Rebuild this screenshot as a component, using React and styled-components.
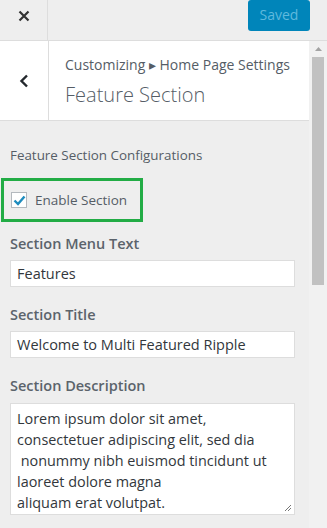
import React from 'react'
import styled, { createGlobalStyle } from 'styled-components'

const Global = createGlobalStyle`
  html, body { margin: 0; padding: 0; }
  body {
    background: #eeeeee;
    font-family: "Open Sans", "Noto Sans", sans-serif;
    color: #555d66;
    overflow: hidden;
  }
`

// LAYOUT
const Page = styled.div`
  width: 327px;
  height: 528px;
  display: flex;
  flex-direction: column;
  background: #eee;
  overflow: hidden;
`

const TopBar = styled.div`
  height: 40px;
  flex: none;
  display: flex;
  align-items: flex-start;
  justify-content: space-between;
  border-bottom: 1px solid #dddddd;
  background: #eeeeee;
`

const CloseBtn = styled.div`
  width: 48px;
  height: 40px;
  box-sizing: border-box;
  padding-bottom: 9px;
  border-right: 1px solid #dddddd;
  display: flex;
  align-items: center;
  justify-content: center;
`

const SaveBtn = styled.button`
  margin: 0 17px 0 0;
  width: 62px;
  height: 31px;
  padding: 0 0 2px;
  border: none;
  border-radius: 3px;
  background: #0085ba;
  color: #5fb9dd;
  font-family: inherit;
  font-size: 14px;
`

const Body = styled.div`
  flex: 1;
  display: flex;
  min-height: 0;
`

const Main = styled.div`
  flex: 1;
  display: flex;
  flex-direction: column;
`

const Scrollbar = styled.div`
  width: 18px;
  flex: none;
  background: #f1f1f1;
  display: flex;
  flex-direction: column;
  align-items: center;
`

const ScrollArrow = styled.div`
  height: 16px;
  display: flex;
  align-items: center;
  justify-content: center;
`

const Thumb = styled.div`
  width: 12px;
  height: 228px;
  background: #c1c1c1;
`

const Header = styled.div`
  height: 79px;
  display: flex;
  background: #fff;
  border-bottom: 1px solid #dddddd;
`

const BackBtn = styled.div`
  width: 48px;
  border-right: 1px solid #dddddd;
  display: flex;
  align-items: center;
  justify-content: center;
`

const TitleBlock = styled.div`
  flex: 1;
  padding: 14px 0 0 16px;
`

const Crumb = styled.div`
  font-size: 14px;
  color: #555d66;
  line-height: 20px;
`

const Title = styled.div`
  font-size: 20px;
  font-weight: 300;
  color: #555d66;
  line-height: 28px;
  margin-top: 6px;
`

const Content = styled.div`
  padding: 25px 0 0 10px;
`

const SectionNote = styled.div`
  font-size: 13.4px;
  line-height: 18px;
`

const Highlight = styled.label`
  margin: 14px 0 0 -9px;
  width: 142px;
  height: 44px;
  box-sizing: border-box;
  border: 3px solid #22ac45;
  display: flex;
  align-items: center;
  gap: 8px;
  padding-left: 7px;
  font-size: 13.5px;
`

const Check = styled.span`
  width: 16px;
  height: 16px;
  box-sizing: border-box;
  border: 1px solid #b4b9be;
  background: #fff;
  display: flex;
  align-items: center;
  justify-content: center;
`

const Field = styled.div`
  margin-top: ${p => p.$top}px;
`

const Label = styled.div`
  font-size: 14.5px;
  font-weight: 600;
  line-height: 20px;
  color: #5b636b;
`

const Input = styled.div`
  margin-top: 6px;
  width: 285px;
  height: 27px;
  box-sizing: border-box;
  background: #fff;
  border: 1px solid #dddddd;
  padding: 0 6px;
  font-size: 14.5px;
  line-height: 25px;
  color: #32373c;
`

const TextArea = styled.div`
  position: relative;
  margin-top: 7px;
  width: 285px;
  height: 112px;
  box-sizing: border-box;
  background: #fff;
  border: 1px solid #dddddd;
  padding: 4px 6px;
  font-size: 14.4px;
  line-height: 21px;
  color: #32373c;
  white-space: pre;
`

const Grip = styled.svg`
  position: absolute;
  right: 2px;
  bottom: 2px;
`

const desc = `Lorem ipsum dolor sit amet,
consectetuer adipiscing elit, sed dia
 nonummy nibh euismod tincidunt ut
laoreet dolore magna
aliquam erat volutpat.`

export default function App() {
  return (
    <Page>
      <Global />
      <TopBar>
        <CloseBtn>
          <svg width="12" height="12" viewBox="0 0 12 12">
            <path d="M1.5 1.5 L10.5 10.5 M10.5 1.5 L1.5 10.5" stroke="#333" strokeWidth="2.2" />
          </svg>
        </CloseBtn>
        <SaveBtn>Saved</SaveBtn>
      </TopBar>
      <Body>
        <Main>
          <Header>
            <BackBtn>
              <svg width="10" height="14" viewBox="0 0 10 14">
                <path d="M8 1.5 L2.5 7 L8 12.5" stroke="#23282d" strokeWidth="2.4" fill="none" />
              </svg>
            </BackBtn>
            <TitleBlock>
              <Crumb>Customizing ▸ Home Page Settings</Crumb>
              <Title>Feature Section</Title>
            </TitleBlock>
          </Header>
          <Content>
            <SectionNote>Feature Section Configurations</SectionNote>
            <Highlight>
              <Check>
                <svg width="13" height="11" viewBox="0 0 13 11">
                  <path d="M1.5 5.5 L5 9 L11.5 1.5" stroke="#1e8cbe" strokeWidth="2.4" fill="none" />
                </svg>
              </Check>
              Enable Section
            </Highlight>
            <Field $top={12}>
              <Label>Section Menu Text</Label>
              <Input>Features</Input>
            </Field>
            <Field $top={18}>
              <Label>Section Title</Label>
              <Input>Welcome to Multi Featured Ripple</Input>
            </Field>
            <Field $top={18}>
              <Label>Section Description</Label>
              <TextArea>
                {desc}
                <Grip width="8" height="8" viewBox="0 0 8 8">
                  <path d="M7 1 L1 7 M7 4 L4 7" stroke="#777" strokeWidth="1" />
                </Grip>
              </TextArea>
            </Field>
          </Content>
        </Main>
        <Scrollbar>
          <ScrollArrow>
            <svg width="7" height="4" viewBox="0 0 7 4">
              <path d="M0 4 L3.5 0 L7 4 Z" fill="#a3a3a3" />
            </svg>
          </ScrollArrow>
          <Thumb />
        </Scrollbar>
      </Body>
    </Page>
  )
}
